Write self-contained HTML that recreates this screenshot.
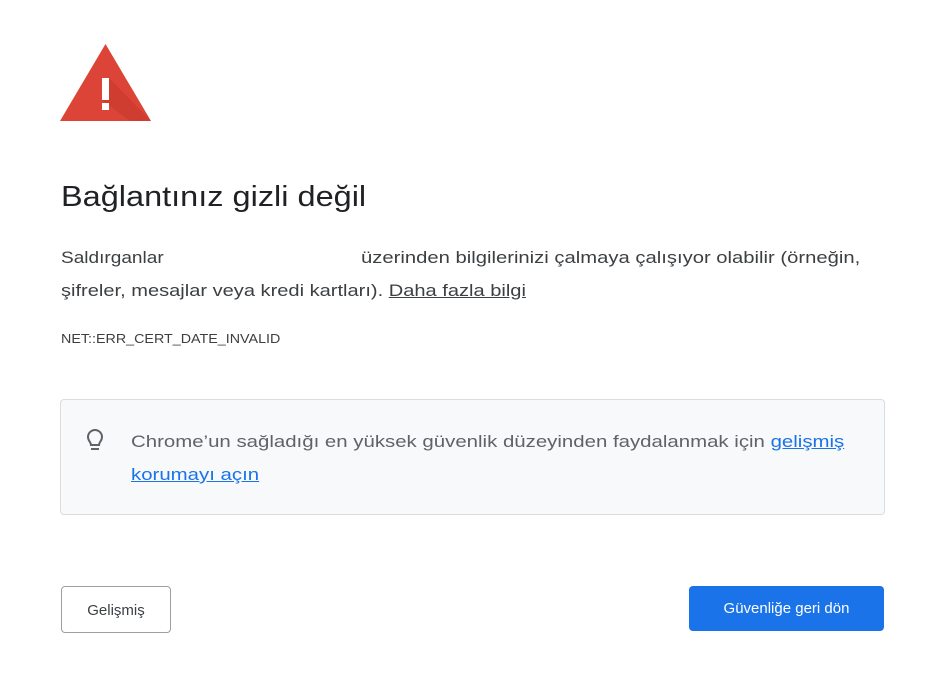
<!DOCTYPE html>
<html><head><meta charset="utf-8"><style>
body{margin:0;background:#fff;font-family:"Liberation Sans","DejaVu Sans",sans-serif;width:945px;height:683px;overflow:hidden;position:relative}
.a{position:absolute;white-space:nowrap;transform-origin:0 50%}
h1{position:absolute;left:61px;top:181px;margin:0;font-weight:normal;font-size:29px;color:#202124;white-space:nowrap;transform:scaleX(1.12);transform-origin:0 50%}
.p{left:61px;font-size:17px;color:#3c4043}
.box{position:absolute;left:60px;top:399px;width:823px;height:114px;background:#f8f9fa;border:1px solid #dadce0;border-radius:4px}
.bx{left:131px;font-size:17px;color:#5f6368}
a{color:#1a73e8;text-decoration:underline}
.b1{position:absolute;left:61px;top:586px;width:110px;height:47px;border:1px solid #9aa0a6;border-radius:4px;box-sizing:border-box;font-size:15px;color:#3c4043;text-align:center;line-height:47px}
.b2{position:absolute;left:689px;top:586px;width:195px;height:45px;background:#1a73e8;border-radius:4px;font-size:15px;color:#fff;text-align:center;line-height:45px}
</style></head><body>
<svg class="a" style="left:58px;top:42px" width="96" height="82" viewBox="58 42 96 82">
<polygon points="105.5,44 60,121 151,121" fill="#db4437"/>
<polygon points="109,78 151,121 130,121 102,100" fill="#c53929" opacity=".6"/>
<rect x="102" y="78" width="7" height="22" fill="#fff"/>
<rect x="102" y="103" width="7" height="7" fill="#fff"/>
</svg>
<h1>Bağlantınız gizli değil</h1>
<div class="a p" style="top:248px;transform:scaleX(1.12)">Saldırganlar</div>
<div class="a p" style="top:248px;left:361px;transform:scaleX(1.19)">üzerinden bilgilerinizi çalmaya çalışıyor olabilir (örneğin,</div>
<div class="a p" style="top:281px;transform:scaleX(1.18)">şifreler, mesajlar veya kredi kartları). <a style="color:#3c4043">Daha fazla bilgi</a></div>
<div class="a" style="left:61px;top:331px;font-size:13px;color:#3c4043;transform:scaleX(1.1)">NET::ERR_CERT_DATE_INVALID</div>
<div class="box"></div>
<svg class="a" style="left:84px;top:428px" width="22" height="26" viewBox="0 0 22 26"><path d="M7 17 C7 14 4 13 4 9 A7 7 0 0 1 18 9 C18 13 15 14 15 17 Z" fill="none" stroke="#5f6368" stroke-width="2"/><path d="M7 21 H15" stroke="#5f6368" stroke-width="2"/></svg>
<div class="a bx" style="top:432px;transform:scaleX(1.2)">Chrome’un sağladığı en yüksek güvenlik düzeyinden faydalanmak için <a>gelişmiş</a></div>
<div class="a bx" style="top:465px;transform:scaleX(1.2)"><a>korumayı açın</a></div>
<div class="b1">Gelişmiş</div>
<div class="b2">Güvenliğe geri dön</div>
</body></html>
